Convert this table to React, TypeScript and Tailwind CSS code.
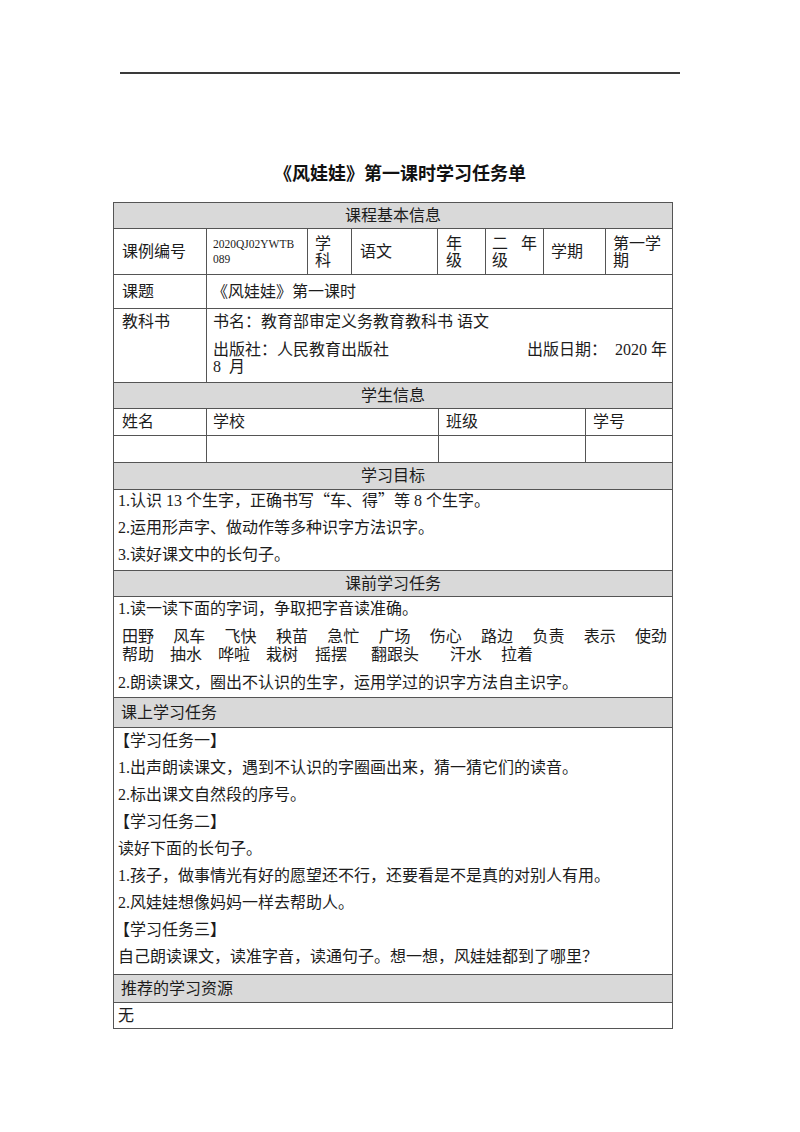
const serif = "font-['Liberation_Serif','Noto_Sans_CJK_SC',serif]";
const cjk = "font-['Noto_Sans_CJK_SC',sans-serif]";
const line = "border-[#555]";

function Header({ text, left = false, h }: { text: string; left?: boolean; h: string }) {
  return (
    <div className={`flex items-center bg-[#d9d9d9] border-b ${line} ${h} ${left ? "px-[7px]" : "justify-center"}`}>
      {text}
    </div>
  );
}

const words1 = ["田野", "风车", "飞快", "秧苗", "急忙", "广场", "伤心", "路边", "负责", "表示", "使劲"];

export default function App() {
  return (
    <div className={`w-[800px] min-h-[1132px] bg-white text-[#1c1c1c] ${serif}`}>
      <div className="pt-[72px]">
        <div className="ml-[120px] w-[560px] h-[2px] bg-[#3a3a3a]" />
      </div>

      <h1 className={`mt-[86px] text-center text-[18px] leading-[24px] font-bold ${cjk} text-[#111]`}>
        《风娃娃》第一课时学习任务单
      </h1>

      <div className={`mt-[18px] ml-[113px] w-[560px] border-l border-r border-t ${line} text-[16px]`}>
        {/* 课程基本信息 */}
        <Header text="课程基本信息" h="h-[26px]" />

        <div className={`flex h-[46px] border-b ${line}`}>
          <div className="w-[92px] flex items-center px-[8px]">课例编号</div>
          <div className={`w-[101px] flex flex-col justify-center pl-[6px] border-l ${line} text-[11.5px] leading-[15px]`}>
            <span>2020QJ02YWTB</span>
            <span>089</span>
          </div>
          <div className={`w-[44px] flex items-center px-[7px] border-l ${line} leading-[17px]`}>学科</div>
          <div className={`w-[86px] flex items-center px-[8px] border-l ${line}`}>语文</div>
          <div className={`w-[48px] flex items-center px-[8px] border-l ${line} leading-[17px]`}>年级</div>
          <div className={`w-[58px] flex flex-col justify-center px-[6px] border-l ${line} leading-[17px]`}>
            <div className="flex justify-between">
              <span>二</span>
              <span>年</span>
            </div>
            <span>级</span>
          </div>
          <div className={`w-[62px] flex items-center px-[7px] border-l ${line}`}>学期</div>
          <div className={`flex-1 flex items-center px-[7px] border-l ${line} leading-[17px]`}>
            <div>
              <div className="flex justify-between">
                <span>第</span>
                <span>一</span>
                <span>学</span>
              </div>
              <span>期</span>
            </div>
          </div>
        </div>

        <div className={`flex h-[34px] border-b ${line}`}>
          <div className="w-[92px] flex items-center px-[8px]">课题</div>
          <div className={`flex-1 flex items-center pl-[5px] border-l ${line}`}>《风娃娃》第一课时</div>
        </div>

        <div className={`flex h-[74px] border-b ${line}`}>
          <div className="w-[92px] px-[8px] pt-[4px] leading-[18px]">教科书</div>
          <div className={`flex-1 pl-[6px] pr-[5px] pt-[4px] border-l ${line} leading-[18px]`}>
            <div>书名：教育部审定义务教育教科书 语文</div>
            <div className="mt-[10px] leading-[17px]">
              <div className="flex justify-between">
                <span>出版社：人民教育出版社</span>
                <span>出版日期：&nbsp; 2020 年</span>
              </div>
              <div>8&nbsp; 月</div>
            </div>
          </div>
        </div>

        {/* 学生信息 */}
        <Header text="学生信息" h="h-[26px]" />
        <div className={`flex h-[27px] border-b ${line}`}>
          <div className="w-[92px] flex items-center px-[8px]">姓名</div>
          <div className={`w-[232px] flex items-center px-[6px] border-l ${line}`}>学校</div>
          <div className={`w-[147px] flex items-center px-[7px] border-l ${line}`}>班级</div>
          <div className={`flex-1 flex items-center px-[7px] border-l ${line}`}>学号</div>
        </div>
        <div className={`flex h-[27px] border-b ${line}`}>
          <div className="w-[92px]" />
          <div className={`w-[232px] border-l ${line}`} />
          <div className={`w-[147px] border-l ${line}`} />
          <div className={`flex-1 border-l ${line}`} />
        </div>

        {/* 学习目标 */}
        <Header text="学习目标" h="h-[27px]" />
        <div className={`h-[81px] border-b ${line} px-[4px] flex flex-col gap-[9px] leading-[18px]`}>
          <p>
            1.认识 13 个生字，正确书写<span className={cjk}>“</span>车、得<span className={cjk}>”</span>等 8 个生字。
          </p>
          <p>2.运用形声字、做动作等多种识字方法识字。</p>
          <p>3.读好课文中的长句子。</p>
        </div>

        {/* 课前学习任务 */}
        <Header text="课前学习任务" h="h-[26px]" />
        <div className={`h-[101px] border-b ${line} px-[4px] pt-[3px] flex flex-col gap-[10px] leading-[18px]`}>
          <p>1.读一读下面的字词，争取把字音读准确。</p>
          <div>
            <div className="flex justify-between pl-[4px] pr-[1px]">
              {words1.map((w) => (
                <span key={w}>{w}</span>
              ))}
            </div>
            <div className="flex pl-[4px]">
              <span>帮助</span>
              <span className="ml-[16px]">抽水</span>
              <span className="ml-[16px]">哗啦</span>
              <span className="ml-[16px]">栽树</span>
              <span className="ml-[17px]">摇摆</span>
              <span className="ml-[24px]">翻跟头</span>
              <span className="ml-[31px]">汗水</span>
              <span className="ml-[19px]">拉着</span>
            </div>
          </div>
          <p>2.朗读课文，圈出不认识的生字，运用学过的识字方法自主识字。</p>
        </div>

        {/* 课上学习任务 */}
        <Header text="课上学习任务" left h="h-[30px]" />
        <div className={`h-[247px] border-b ${line} px-[4px] pt-[4px] flex flex-col gap-[9px] leading-[18px]`}>
          <p className="-ml-[4px]">【学习任务一】</p>
          <p>1.出声朗读课文，遇到不认识的字圈画出来，猜一猜它们的读音。</p>
          <p>2.标出课文自然段的序号。</p>
          <p className="-ml-[4px]">【学习任务二】</p>
          <p>读好下面的长句子。</p>
          <p>1.孩子，做事情光有好的愿望还不行，还要看是不是真的对别人有用。</p>
          <p>2.风娃娃想像妈妈一样去帮助人。</p>
          <p className="-ml-[4px]">【学习任务三】</p>
          <p>自己朗读课文，读准字音，读通句子。想一想，风娃娃都到了哪里？</p>
        </div>

        {/* 推荐的学习资源 */}
        <Header text="推荐的学习资源" left h="h-[28px]" />
        <div className={`h-[26px] border-b ${line} flex items-center px-[4px]`}>无</div>
      </div>
    </div>
  );
}
